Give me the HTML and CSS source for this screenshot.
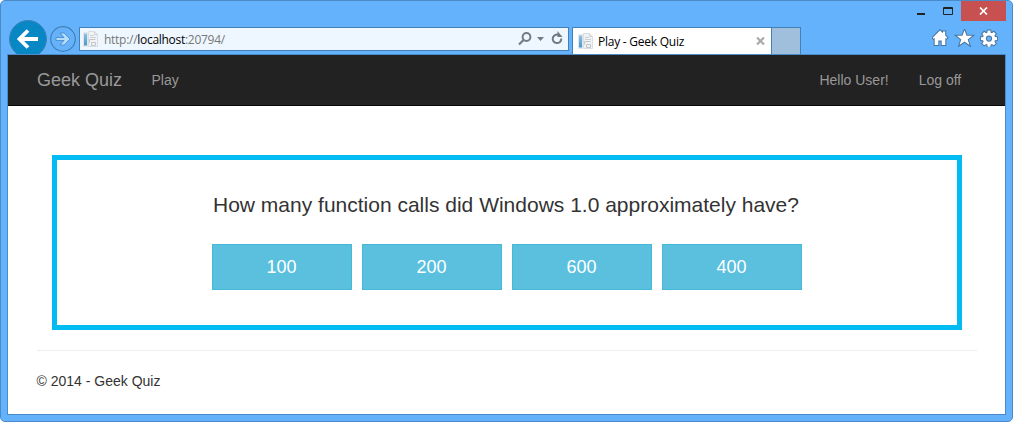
FILE: index.html
```html
<!DOCTYPE html>
<html lang="en">
<head>
<meta charset="utf-8">
<title>Play - Geek Quiz</title>
<link rel="stylesheet" href="styles.css">
</head>
<body>
<svg class="defs" width="0" height="0"><defs>
  <linearGradient id="bar" x2="0" y2="1"><stop offset="0" stop-color="#8fc0e0"/><stop offset="1" stop-color="#4a98cc"/></linearGradient>
  <symbol id="doc" viewBox="0 0 16 17">
    <path d="M.5 1.500h4v14h-4z" fill="#edf3f8" stroke="#dfe6ec"/>
    <path d="M1 2.500h3v12H1z" fill="url(#bar)"/>
    <path d="M5.500 .5h6l3 3v12h-9z" fill="#f1f2f4" stroke="#dadee2"/>
    <path d="M11.500 .5v3h3M7 4.500h4M7 6.500h6" fill="none" stroke="#ccd2d8"/>
    <path d="M6.500 11.500v-3h6M8.500 11.500h4v3h-4z" fill="none" stroke="#bfc6cc"/>
  </symbol>
</defs></svg>
<div class="window">
  <header class="chrome">
    <svg class="back" width="40" height="35" viewBox="0 0 40 35">
      <circle cx="20" cy="20" r="18.500" fill="#0887c5" stroke="#4280b7"/>
      <path d="M30 20H12M20 11.500L11.500 20L20 28.500" fill="none" stroke="#fff" stroke-width="3.800"/>
    </svg>
    <svg class="forward" width="26" height="26" viewBox="0 0 26 26">
      <circle cx="13" cy="13" r="12.300" fill="#65b1fa" stroke="#4280b7" stroke-width="1.200"/>
      <path d="M6 11.500h8l-4-4.500h4.200L20 13l-5.800 6H10l4-4.500H6z" fill="#b4dcfc" stroke="#4388c5" stroke-width=".8"/>
    </svg>
    <div class="address">
      <svg class="favicon" width="16" height="17"><use href="#doc"/></svg>
      <span class="url">http://<b>localhost</b>:20794/</span>
      <svg class="tools" width="48" height="16" viewBox="0 0 48 16" fill="none" stroke="#737a81">
        <circle cx="9.500" cy="6" r="3.900" stroke-width="2"/><path d="M6.500 9L2 13.500" stroke-width="2.200"/>
        <path d="M20 6h7l-3.500 4z" fill="#737a81" stroke="none"/>
        <path d="M42.500 4.300A4.300 4.300 0 1 0 44.300 7.500" stroke-width="2"/><path d="M40.500 0v6h5z" fill="#737a81" stroke="none"/>
      </svg>
    </div>
    <div class="tab">
      <svg class="favicon" width="16" height="17"><use href="#doc"/></svg>
      <span class="tab-title">Play - Geek Quiz</span>
      <svg class="tab-close" width="9" height="8" viewBox="0 0 9 8"><path d="M1 .5l7 7M8 .5l-7 7" stroke="#aaa" stroke-width="2.200"/></svg>
    </div>
    <div class="new-tab"></div>
    <div class="corner">
      <div class="controls">
        <svg width="46" height="20" viewBox="0 0 46 20"><path d="M2 13h8" stroke="#222" stroke-width="2" shape-rendering="crispEdges"/><path d="M28.500 6.500h9v7h-9z M28 7.500h10" fill="none" stroke="#222"/></svg>
        <div class="close"><svg width="9" height="8" viewBox="0 0 9 8"><path d="M1 .5l7 7M8 .5l-7 7" stroke="#fff" stroke-width="1.700"/></svg></div>
      </div>
      <svg class="actions" width="66" height="18" viewBox="0 0 66 18">
        <path d="M8 1.500L11 4.300V2.500h2.200v4L15.300 8.800l-1 1-1-.8V16H9.700v-4.500H6.300V16H2.700V9l-1 .8-1-1z"/>
        <path d="M32.500 1.200l2.100 5.500h5.700l-4.600 3.700 1.800 5.700-5-3.500-5 3.500 1.800-5.700-4.600-3.700h5.700z"/>
        <path fill-rule="evenodd" d="M55.700 1.500h2.600l.4 2.200 1.200.5 1.900-1.300 1.900 1.900-1.300 1.900.5 1.200 2.200.4v2.600l-2.200.4-.5 1.200 1.300 1.900-1.900 1.900-1.900-1.300-1.200.5-.4 2.200h-2.600l-.4-2.200-1.200-.5-1.900 1.300-1.900-1.900 1.300-1.900-.5-1.200-2.200-.4V8.300l2.200-.4.500-1.200-1.300-1.900 1.900-1.900 1.900 1.300 1.200-.5zM57 6.500a3.100 3.100 0 1 0 0 6.200a3.100 3.100 0 1 0 0-6.200z"/>
      </svg>
    </div>
  </header>
  <div class="page">
    <nav class="navbar">
      <span class="brand">Geek Quiz</span>
      <span class="play">Play</span>
      <span class="user">Hello User!</span>
      <span class="logoff">Log off</span>
    </nav>
    <main class="quiz">
      <p class="question">How many function calls did Windows 1.0 approximately have?</p>
      <div class="answers">
        <button class="answer">100</button>
        <button class="answer">200</button>
        <button class="answer">600</button>
        <button class="answer">400</button>
      </div>
    </main>
    <footer class="footer">© 2014 - Geek Quiz</footer>
  </div>
</div>
</body>
</html>
```
FILE: styles.css
```css
* { box-sizing: border-box; }
body { margin: 0; background: #fff; font: 14px/20px "Liberation Sans", Arial, sans-serif; color: #333; }
svg { display: block; flex: none; }
.defs { position: absolute; }
.window { height: 422px; padding: 0 6px 6px; border: 1px solid #4c8bc8; border-radius: 5px; background: #65b2fc; display: flex; flex-direction: column; }
.chrome { height: 53px; flex: none; display: flex; align-items: flex-start; font: 12px/16px "Open Sans", "Noto Sans", sans-serif; }
.back { margin: 18px 0 0 1px; }
.forward { margin: 25px 0 0 2px; }
.address { margin: 26px 0 0 3px; width: 490px; height: 24px; border: 1px solid #4280b7; background: #eef7ff; display: flex; align-items: center; padding: 0 3px 0 3px; }
.url { margin-left: 5px; padding-top: 2px; color: #777; white-space: nowrap; letter-spacing: -0.28px; }
.url b { font-weight: 400; color: #000; }
.tools { margin-left: auto; }
.tab { margin: 26px 0 0 3px; width: 200px; height: 27px; border: 1px solid #4280b7; border-bottom: 0; background: #fff; display: flex; align-items: center; padding: 0 6px 0 5px; color: #000; }
.tab-title { margin-left: 4px; padding-top: 2px; white-space: nowrap; letter-spacing: -0.24px; }
.tab-close { margin-left: auto; }
.new-tab { margin-top: 26px; width: 29px; height: 27px; border: 1px solid #4280b7; border-width: 1px 1px 0 0; background: #a0bfdc; }
.corner { margin-left: auto; width: 91px; }
.controls { display: flex; margin-bottom: 8px; }
.close { width: 45px; height: 20px; background: #c75050; display: flex; align-items: center; justify-content: center; }
.actions { margin-left: 17px; fill: #fff; stroke: #47749f; stroke-width: 2px; paint-order: stroke; }
.page { flex: 1; border: 1px solid #4b8bcb; background: #fff; }
.navbar { height: 51px; background: #222; border-bottom: 1px solid #080808; color: #999; display: flex; align-items: center; padding: 0 43px 0 29px; }
.brand { font-size: 18px; width: 114.5px; }
.user { margin-left: auto; }
.logoff { margin-left: 30px; width: 43.300px; }
.quiz { margin: 49px 43px 0 44px; height: 175px; border: 5px solid #00bcf2; padding-top: 30px; }
.question { margin: 0; padding-right: 2px; font-size: 21px; line-height: 30px; text-align: center; }
.answers { display: flex; justify-content: center; gap: 10px; margin-top: 24px; }
.answer { width: 140px; height: 46px; padding: 0 1px 0 0; border: 1px solid #46b8da; background: #5bc0de; color: #fff; font: 18px/24px "Liberation Sans", Arial, sans-serif; }
.footer { margin: 20px 28px 0 28.500px; padding-top: 20px; border-top: 1px solid #eee; }
```
